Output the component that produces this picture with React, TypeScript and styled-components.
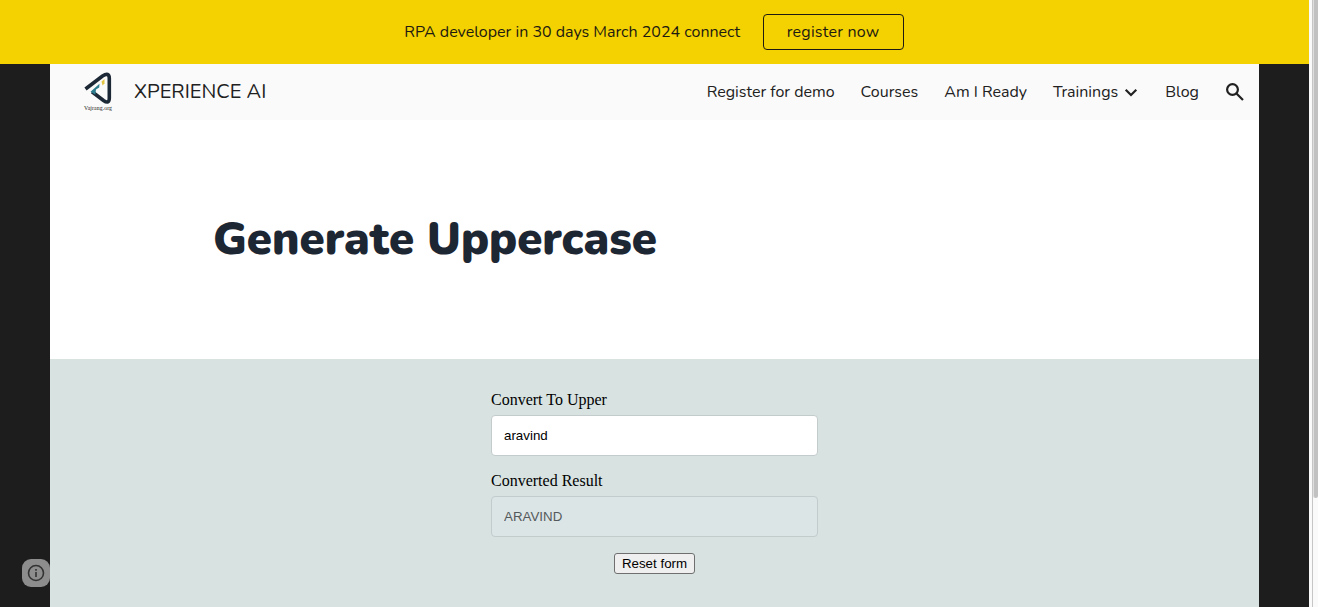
import React, { useState } from 'react';
import styled, { createGlobalStyle } from 'styled-components';

const GlobalStyle = createGlobalStyle`
  * { box-sizing: border-box; }
  body { margin: 0; background: #1d1d1d; overflow: hidden; }
`;

const Screen = styled.div`
  display: flex;
  height: 607px;
  font-family: Nunito, Lato, sans-serif;
  color: #212121;
`;

const Page = styled.div`
  flex: 1;
  display: flex;
  flex-direction: column;
`;

const ScrollTrack = styled.div`
  width: 9px;
  display: flex;
  background: #fafafa;
`;

const ScrollEdge = styled.div`
  width: 4px;
  border-right: 1px solid #c6c6c6;
`;

const ScrollThumb = styled.div`
  flex: 1;
  height: 498px;
  border-left: 1px solid #dedede;
  border-radius: 0 0 3px 3px;
  background: #c1c1c1;
`;

const Banner = styled.div`
  height: 64px;
  padding-right: 1px;
  display: flex;
  align-items: center;
  justify-content: center;
  gap: 22.5px;
  background: #f4d100;
  color: #1d1a12;
  font-size: 16px;
`;

const Label = styled.span<{ $spacing?: number }>`
  white-space: nowrap;
  letter-spacing: ${(p) => p.$spacing ?? 0}px;
`;

const BannerButton = styled.button`
  width: 141px;
  height: 36px;
  padding: 0;
  border: 1px solid #1d1a12;
  border-radius: 4px;
  background: transparent;
  color: #1d1a12;
  font: inherit;
`;

const Site = styled.main`
  flex: 1;
  margin: 0 50px;
  display: flex;
  flex-direction: column;
`;

const Header = styled.header`
  height: 56px;
  padding: 0 14px 0 32px;
  display: flex;
  align-items: center;
  justify-content: space-between;
  background: #fafafa;
`;

const Brand = styled.div`
  display: flex;
  align-items: center;
  gap: 20px;
  font-size: 20px;
  line-height: 28px;
`;

const Nav = styled.nav`
  display: flex;
  align-items: center;
  gap: 26px;
  font-size: 16px;
`;

const NavItem = styled.a`
  display: flex;
  align-items: center;
  gap: 6px;
`;

const Hero = styled.section`
  height: 239px;
  padding: 0 0 2px 163px;
  display: flex;
  align-items: center;
  background: #fff;
`;

const Title = styled.h1`
  margin: 0;
  font-size: 45.333px;
  font-weight: 900;
  line-height: 60px;
  color: #1d2733;
`;

const FormSection = styled.section`
  flex: 1;
  padding-top: 32px;
  display: flex;
  justify-content: center;
  background: #d7e2e1;
`;

const Form = styled.form`
  width: 327px;
  display: flex;
  flex-direction: column;
`;

const FieldLabel = styled.label`
  height: 24px;
  line-height: 18px;
  font-family: 'Liberation Serif', serif;
  font-size: 16px;
  color: #000;
`;

const Field = styled.input`
  height: 41px;
  margin: 0 0 16px;
  padding: 0 12px;
  border: 1px solid #c3cbcc;
  border-radius: 4px;
  background: #fff;
  color: #000;
  font: 13.333px 'Liberation Sans', sans-serif;
  outline: none;
  &:disabled {
    background: #dce5e6;
    color: #545a5b;
  }
`;

const ResetButton = styled.button`
  align-self: center;
  width: 81px;
  height: 21px;
  padding: 0;
  border: 1px solid #6f6f6f;
  border-radius: 3px;
  background: #efefef;
  color: #000;
  font: 13.333px 'Liberation Sans', sans-serif;
`;

const InfoBadge = styled.button`
  position: absolute;
  left: 22px;
  top: 559px;
  width: 28px;
  height: 28px;
  padding: 0;
  border: 0;
  border-radius: 9px;
  display: grid;
  place-items: center;
  background: #8d8d8d;
  color: #333;
`;

const Logo = () => (
  <svg width="32" height="42" viewBox="0 0 32 42">
    <path d="M3.500 18 20.500 5Q27.300 .8 27.300 7.500V27Q27.300 33.500 21.500 29.500L10 20.800" fill="none" stroke="#1d2836" strokeWidth="3.6" />
    <path d="M8.500 20.800 17.500 12.800 17.200 16.500 14 18.500 13.300 23.800Z" fill="#2c7c8e" />
    <path d="M19.500 10.500 22.500 8V12.500L20.500 14.500Z" fill="#e3c544" />
    <text x="2" y="39.300" fontFamily="Liberation Serif" fontSize="5.800" fill="#222" textLength="28">Vajrang.org</text>
  </svg>
);

const navItems = [
  { label: 'Register for demo' },
  { label: 'Courses' },
  { label: 'Am I Ready' },
  { label: 'Trainings', menu: true },
  { label: 'Blog' },
];

export default function App() {
  const [value, setValue] = useState('aravind');
  return (
    <Screen>
      <GlobalStyle />
      <Page>
        <Banner>
          <Label>RPA developer in 30 days March 2024 connect</Label>
          <BannerButton><Label $spacing={0.22}>register now</Label></BannerButton>
        </Banner>
        <Site>
          <Header>
            <Brand><Logo /><Label>XPERIENCE AI</Label></Brand>
            <Nav>
              {navItems.map((item) => (
                <NavItem key={item.label}>
                  <Label>{item.label}</Label>
                  {item.menu && (
                    <svg width="15" height="10" viewBox="0 0 15 10"><path d="m1.700 2.800 5.300 5.200 5.300-5.200" fill="none" stroke="#212121" strokeWidth="2.200" /></svg>
                  )}
                </NavItem>
              ))}
              <svg width="20" height="20" viewBox="0 0 20 20" fill="none" stroke="#212121" strokeWidth="2.200">
                <circle cx="7.500" cy="7.500" r="5.400" /><path d="m11.500 11.500 6.500 6.500" />
              </svg>
            </Nav>
          </Header>
          <Hero><Title><Label>Generate Uppercase</Label></Title></Hero>
          <FormSection>
            <Form onSubmit={(e) => e.preventDefault()}>
              <FieldLabel htmlFor="source">Convert To Upper</FieldLabel>
              <Field id="source" value={value} onChange={(e) => setValue(e.target.value)} />
              <FieldLabel htmlFor="result">Converted Result</FieldLabel>
              <Field id="result" value={value.toUpperCase()} disabled readOnly />
              <ResetButton type="button" onClick={() => setValue('')}>Reset form</ResetButton>
            </Form>
          </FormSection>
        </Site>
      </Page>
      <ScrollTrack><ScrollEdge /><ScrollThumb /></ScrollTrack>
      <InfoBadge aria-label="Page details">
        <svg width="20" height="20" viewBox="0 0 20 20" fill="none" stroke="currentColor" strokeWidth="1.6">
          <circle cx="10" cy="10" r="7.500" /><path d="M10 9v5M10 6v1.700" />
        </svg>
      </InfoBadge>
    </Screen>
  );
}
